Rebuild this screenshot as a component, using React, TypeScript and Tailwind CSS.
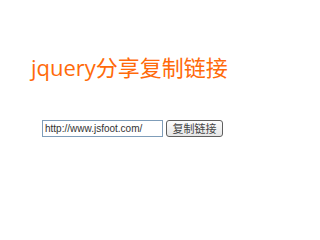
export default function App() {
  return (
    <div className="w-[268px] h-[217px] bg-white font-['Liberation_Sans','Noto_Sans_CJK_SC',sans-serif]">
      <div className="pt-[53px] pl-[31px]">
        <h1 className="text-[22px] leading-[28px] text-[#ff6a0a] font-normal font-['Open_Sans','Noto_Sans_CJK_SC',sans-serif]">
          jquery分享复制链接
        </h1>
      </div>
      <div className="mt-[39px] pl-[42px] flex items-center gap-[3px]">
        <input
          readOnly
          value="http://www.jsfoot.com/"
          className="w-[121px] h-[17px] border border-[#7f9db9] px-[2px] text-[10px] text-[#333] outline-none bg-white"
        />
        <button className="w-[57px] h-[17px] rounded-[3px] border border-[#5f5f5f] bg-gradient-to-b from-[#fdfdfd] to-[#e6e6e6] text-[11px] leading-none text-[#444] font-['Noto_Sans_CJK_SC',sans-serif]">
          复制链接
        </button>
      </div>
    </div>
  );
}
